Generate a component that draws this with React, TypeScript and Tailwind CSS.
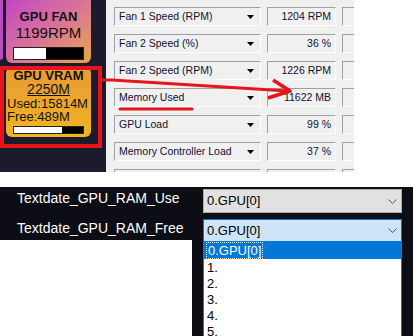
import React from "react";

const ROWS = [
  { label: "Fan 1 Speed (RPM)", value: "1204 RPM" },
  { label: "Fan 2 Speed (%)", value: "36 %" },
  { label: "Fan 2 Speed (RPM)", value: "1226 RPM" },
  { label: "Memory Used", value: "11622 MB" },
  { label: "GPU Load", value: "99 %" },
  { label: "Memory Controller Load", value: "37 %" },
  { label: "", value: "" },
];

const LIST = ["0.GPU[0]", "1.", "2.", "3.", "4.", "5."];

function Bar({ pct, h }: { pct: number; h: string }) {
  return (
    <div className={`w-[71px] ${h} bg-black border border-[#222] flex`}>
      <div className="h-full bg-white" style={{ width: `${pct}%` }} />
    </div>
  );
}

function Chevron() {
  return (
    <svg width="9" height="5" viewBox="0 0 9 5" className="shrink-0">
      <polyline points="0.5,0.5 4.5,4.5 8.5,0.5" fill="none" stroke="#555" strokeWidth="1" />
    </svg>
  );
}

export default function App() {
  return (
    <div
      className="relative w-[413px] h-[336px] bg-white overflow-hidden"
      style={{ fontFamily: '"Liberation Sans", Arial, sans-serif' }}
    >
      {/* top screenshot */}
      <div className="flex h-[172px]">
        <div className="w-[106px] h-full bg-[#1b1b2d] flex items-start overflow-hidden">
          <div className="w-[3px] h-[60px] bg-[#b84cc0] rounded-br-[4px]" />
          <div className="ml-[3px] w-[85px] flex flex-col gap-[4px] text-[#111]">
            {/* GPU FAN */}
            <div className="-mt-[8px] h-[71px] rounded-[6px] bg-linear-to-br from-[#c03cc8] via-[#d8709a] to-[#eca43a] flex flex-col items-center pt-[17px]">
              <div className="text-[13px] leading-[16px] font-bold">GPU FAN</div>
              <div className="text-[15px] leading-[16px]">1199RPM</div>
              <div className="mt-[6px]">
                <Bar pct={46} h="h-[13px]" />
              </div>
            </div>
            {/* GPU VRAM */}
            <div className="h-[70px] rounded-[6px] bg-linear-to-b from-[#e89a34] to-[#f0b41e] flex flex-col pt-[2px]">
              <div className="text-[13px] leading-[14px] font-bold text-center">GPU VRAM</div>
              <div className="text-[14px] leading-[13px] text-center underline">2250M</div>
              <div className="text-[13px] leading-[15px] pl-[1px] whitespace-nowrap">Used:15814M</div>
              <div className="text-[13px] leading-[12px] pl-[1px]">Free:489M</div>
              <div className="mt-[3px] self-center">
                <Bar pct={70} h="h-[8px]" />
              </div>
            </div>
          </div>
        </div>

        <div className="w-[248px] h-full bg-[#f0f0f0] flex overflow-hidden">
          <div className="w-[4px] bg-[#fafafa]" />
          <div className="w-px bg-[#b4b4b4]" />
          <div className="pl-[8px] pt-[7px] flex flex-col gap-[8px] text-[10.5px] text-[#101030]">
            {ROWS.map((r, i) => (
              <div key={i} className="flex h-[19px] gap-[6px] shrink-0">
                <div className="w-[147px] h-full flex items-center justify-between pl-[4px] pr-[6px] border border-[#a0a0a0] border-r-[#fff] border-b-[#fff] bg-[#f0f0f0]">
                  <span className="whitespace-nowrap">{r.label}</span>
                  <svg width="7" height="4" viewBox="0 0 7 4">
                    <polygon points="0,0 7,0 3.5,4" fill="#000" />
                  </svg>
                </div>
                <div className="w-[69px] h-full flex items-center justify-end pr-[4px] border border-[#a0a0a0] border-r-[#fff] border-b-[#fff]">
                  {r.value}
                </div>
                <div className="w-[20px] h-full border border-[#a0a0a0] border-b-[#fff]" />
              </div>
            ))}
          </div>
        </div>
      </div>

      <div className="h-[15px]" />

      {/* bottom screenshot */}
      <div className="flex h-[149px] text-[14px]">
        <div className="w-[192px] flex flex-col">
          <div className="h-[53px] bg-[#0d0d16] text-white pl-[17px] pt-[1px]">
            <div className="h-[20px] flex items-center">Textdate_GPU_RAM_Use</div>
            <div className="h-[31px] flex items-center pt-[10px]">Textdate_GPU_RAM_Free</div>
          </div>
          <div className="flex-1 bg-white" />
        </div>
        <div className="flex-1 bg-[#0d0d16] pl-[11px] pt-[2px] text-[13px]">
          <div className="w-[199px] h-[24px] bg-[#e1e1e1] border border-[#adadad] flex items-center justify-between pl-[3px] pr-[4px] text-black">
            <span>0.GPU[0]</span>
            <Chevron />
          </div>
          <div className="mt-[6px] w-[199px] h-[23px] bg-[#cce4f7] border border-[#0078d7] flex items-center justify-between pl-[3px] pr-[4px] text-black">
            <span>0.GPU[0]</span>
            <Chevron />
          </div>
          <div className="w-[199px] h-[120px] bg-white border-x border-[#646464] overflow-hidden">
            {LIST.map((t, i) => (
              <div
                key={t}
                className={
                  i === 0
                    ? "h-[17px] leading-[17px] pl-[3px] bg-[#0078d7] text-white"
                    : "h-[16px] leading-[18px] pl-[3px] text-black"
                }
              >
                {i === 0 ? (
                  <span className="outline-1 outline-dotted outline-[#f5e6a0] px-px">{t}</span>
                ) : (
                  t
                )}
              </div>
            ))}
          </div>
        </div>
      </div>

      {/* red annotation */}
      <svg className="absolute left-0 top-0 pointer-events-none" width="413" height="172">
        <rect x="2" y="68" width="98" height="78" fill="none" stroke="#e8141c" strokeWidth="4" />
        <path d="M101 80 L112 80 L288 91" fill="none" stroke="#e8141c" strokeWidth="3" />
        <path d="M273 80 L290 91 L268 98" fill="none" stroke="#e8141c" strokeWidth="3.5" strokeLinejoin="round" />
        <path d="M120 109 L192 109" fill="none" stroke="#e8141c" strokeWidth="3" strokeLinecap="round" />
      </svg>
    </div>
  );
}
